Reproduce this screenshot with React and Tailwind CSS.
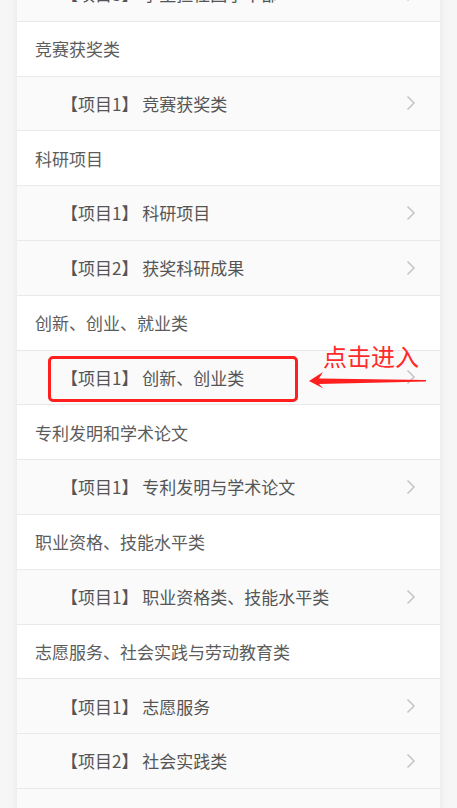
import React from "react";

const rows = [
  { t: "item", n: 3, text: "学生担任团学干部" },
  { t: "head", text: "竞赛获奖类" },
  { t: "item", n: 1, text: "竞赛获奖类" },
  { t: "head", text: "科研项目" },
  { t: "item", n: 1, text: "科研项目" },
  { t: "item", n: 2, text: "获奖科研成果" },
  { t: "head", text: "创新、创业、就业类" },
  { t: "item", n: 1, text: "创新、创业类" },
  { t: "head", text: "专利发明和学术论文" },
  { t: "item", n: 1, text: "专利发明与学术论文" },
  { t: "head", text: "职业资格、技能水平类" },
  { t: "item", n: 1, text: "职业资格类、技能水平类" },
  { t: "head", text: "志愿服务、社会实践与劳动教育类" },
  { t: "item", n: 1, text: "志愿服务" },
  { t: "item", n: 2, text: "社会实践类" },
  { t: "item", n: 3, text: "劳动教育类" },
];

function Chevron() {
  return (
    <svg width="10" height="16" viewBox="0 0 10 16" className="shrink-0">
      <path d="M1.5 1.5 L8 8 L1.5 14.5" fill="none" stroke="#c6c6c6" strokeWidth="1.6" />
    </svg>
  );
}

export default function App() {
  return (
    <div
      className="relative w-[457px] h-[808px] overflow-hidden bg-[#f6f6f6]"
      style={{ fontFamily: '"Noto Sans CJK SC", "Noto Sans", sans-serif' }}
    >
      <div className="mx-[17px] mt-[-33px] bg-white shadow-[0_0_8px_rgba(0,0,0,0.07)]">
        {rows.map((r, i) =>
          r.t === "head" ? (
            <div
              key={i}
              className="h-[54.8px] flex items-center pl-[18px] border-b border-[#e9e9e9] bg-white text-[17px] text-[#5c5c5c]"
            >
              {r.text}
            </div>
          ) : (
            <div
              key={i}
              className="h-[54.8px] flex items-center justify-between pl-[44px] pr-[24px] border-b border-[#e9e9e9] bg-[#fafafa] text-[17px] text-[#555555]"
            >
              <span className="whitespace-pre">{`【项目${r.n}】 ${r.text}`}</span>
              <Chevron />
            </div>
          )
        )}
      </div>

      <div className="absolute left-[48px] top-[356px] w-[250px] h-[46px] border-[3px] border-[#ff1f1f] rounded-[5px]" />
      <div className="absolute left-[323px] top-[344px] text-[24px] leading-none text-[#ff2a2a] whitespace-nowrap">
        点击进入
      </div>
      <svg className="absolute left-[305px] top-[365px]" width="125" height="30" viewBox="0 0 125 30">
        <polygon
          points="4,16 18,7 14,13.5 121,15 121,16.6 14,19 18.5,23.5"
          fill="#ff1f1f"
        />
      </svg>
    </div>
  );
}
